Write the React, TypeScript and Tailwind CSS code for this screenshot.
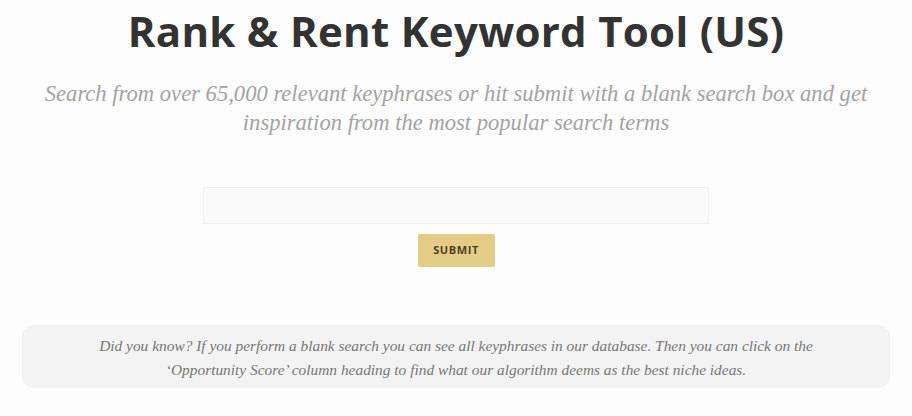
export default function App() {
  return (
    <div className="min-h-screen w-full bg-[#fdfdfd] overflow-hidden">
      <div className="flex flex-col items-center">
        <h1 className="mt-[5px] text-[42px] leading-[52px] font-bold text-[#333333] tracking-[0.3px] font-['Open_Sans',sans-serif]">
          Rank &amp; Rent Keyword Tool (US)
        </h1>
        <p className="mt-[22px] w-[880px] text-center text-[22.6px] leading-[29px] italic text-[#a3a3a3] font-['Liberation_Serif',serif]">
          Search from over 65,000 relevant keyphrases or hit submit with a blank search box and get
          <br />
          inspiration from the most popular search terms
        </p>

        <form className="mt-[50px] flex flex-col items-center">
          <input
            type="text"
            className="w-[506px] h-[37px] border border-[#f0f0f0] bg-[#fafafa] outline-none px-3"
          />
          <button
            type="button"
            className="mt-[10px] w-[77px] h-[33px] rounded-[2px] bg-[#e3cd84] text-[11px] font-bold tracking-[0.6px] text-[#4b3f2c] font-['Open_Sans',sans-serif]"
          >
            SUBMIT
          </button>
        </form>
      </div>

      <div className="mx-[22px] mt-[58px] rounded-[12px] bg-[#f3f3f3] pt-[9px] pb-[6px] text-center text-[15.4px] leading-[24px] italic text-[#777777] font-['Liberation_Serif',serif]">
        Did you know? If you perform a blank search you can see all keyphrases in our database. Then you can click on the
        <br />
        ‘Opportunity Score’ column heading to find what our algorithm deems as the best niche ideas.
      </div>
    </div>
  );
}
